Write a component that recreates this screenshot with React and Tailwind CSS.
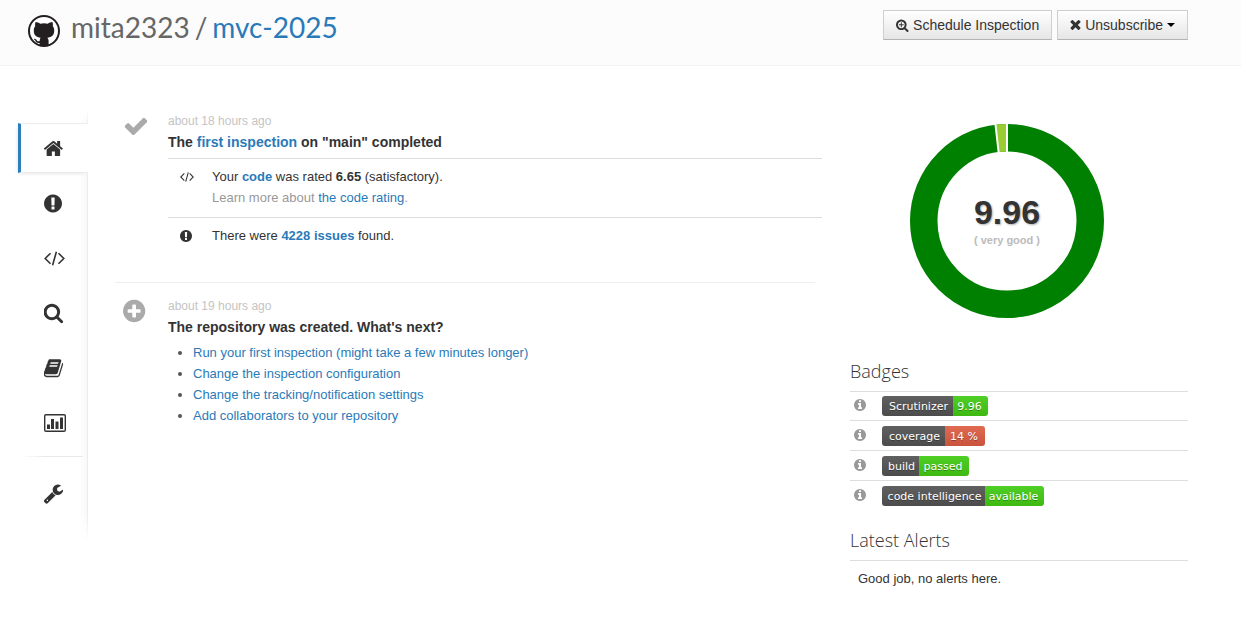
const CIRCLE =
  'M896 128q209 0 385.5 103t279.5 279.5 103 385.5-103 385.5-279.5 279.5-385.5 103-385.5-103-279.5-279.5-103-385.5 103-385.5 279.5-279.5 385.5-103z';
const LENS =
  'M1216 832q0-185-131.5-316.5t-316.5-131.5-316.5 131.5-131.5 316.5 131.5 316.5 316.5 131.5 316.5-131.5 131.5-316.5zm512 832q0 52-38 90t-90 38q-54 0-90-38l-343-342q-179 124-399 124-143 0-273.5-55.5t-225-150-150-225-55.5-273.5 55.5-273.5 150-225 225-150 273.5-55.5 273.5 55.5 225 150 150 225 55.5 273.5q0 220-124 399l343 343q37 37 37 90z';

const GLYPHS = {
  home: {
    box: '96 0 1792 1792',
    d: 'M1472 992v480q0 26-19 45t-45 19h-384v-384h-256v384h-384q-26 0-45-19t-19-45v-480q0-1 .5-3t.5-3l575-474 575 474q1 2 1 6zm223-69l-62 74q-8 9-21 11h-3q-13 0-21-7l-692-577-692 577q-12 8-24 7-13-2-21-11l-62-74q-8-10-7-23.5t11-21.5l719-599q32-26 76-26t76 26l244 204v-195q0-14 9-23t23-9h192q14 0 23 9t9 23v408l219 182q10 8 11 21.5t-7 23.5z',
  },
  alert: {
    box: '128 0 1792 1792',
    d: CIRCLE + 'M1024 1375v-190q0-14-9-23.5t-22-9.5h-192q-13 0-23 10t-10 23v190q0 13 10 23t23 10h192q13 0 22-9.5t9-23.5zM1022 1031l18-621q0-12-10-18-10-8-24-8h-220q-14 0-24 8-10 6-10 18l17 621q0 10 10 17.5t24 7.5h185q14 0 23.5-7.5t10.5-17.5z',
  },
  search: { box: '96 64 1792 1792', d: LENS },
  zoomIn: {
    box: '64 64 1728 1728',
    d: 'M1088 800v64q0 13-9.5 22.5t-22.5 9.5h-224v224q0 13-9.5 22.5t-22.5 9.5h-64q-13 0-22.5-9.5t-9.5-22.5v-224h-224q-13 0-22.5-9.5t-9.5-22.5v-64q0-13 9.5-22.5t22.5-9.5h224v-224q0-13 9.5-22.5t22.5-9.5h64q13 0 22.5 9.5t9.5 22.5v224h224q13 0 22.5 9.5t9.5 22.5z' + LENS,
  },
  book: {
    box: '96 32 1792 1792',
    d: 'M1703 478q40 57 18 129l-275 906q-19 64-76.5 107.5t-122.5 43.5h-923q-77 0-148.5-53.5t-99.5-131.5q-24-67-2-127 0-4 3-27t4-37q1-8-3-21.5t-3-19.5q2-11 8-21t16.5-23.5 16.5-23.5q23-38 45-91.5t30-91.5q3-10 .5-30t-.5-28q3-11 17-28t17-23q21-36 42-92t25-90q1-9-2.5-32t.5-28q4-13 22-30.5t22-22.5q19-26 42.5-84.5t27.5-96.5q1-8-3-25.5t-2-26.5q2-8 9-18t18-23 17-21q8-12 16.5-30.5t15-35 16-36 19.5-32 26.5-23.5 36-11.5 47.5 5.5l-1 3q38-9 51-9h761q74 0 114 56t18 130l-274 906q-36 119-71.5 153.5t-128.5 34.5h-869q-27 0-38 15-11 16-1 43 24 70 144 70h923q29 0 56-15.5t35-41.5l300-987q7-22 5-57 38 15 59 43zm-1064 2q-4 13 2 22.5t20 9.5h608q13 0 25.5-9.5t16.5-22.5l21-64q4-13-2-22.5t-20-9.5h-608q-13 0-25.5 9.5t-16.5 22.5zm-83 256q-4 13 2 22.5t20 9.5h608q13 0 25.5-9.5t16.5-22.5l21-64q4-13-2-22.5t-20-9.5h-608q-13 0-25.5 9.5t-16.5 22.5z',
  },
  wrench: {
    box: '96 0 1792 1792',
    d: 'M448 1472q0-26-19-45t-45-19-45 19-19 45 19 45 45 19 45-19 19-45zm644-420l-682 682q-37 37-90 37-52 0-91-37l-106-108q-38-36-38-90 0-53 38-91l681-681q39 98 114.5 173.5t173.5 114.5zm634-435q0 39-23 106-47 134-164.5 217.5t-258.5 83.5q-185 0-316.5-131.5t-131.5-316.5 131.5-316.5 316.5-131.5q58 0 121.5 16.5t107.5 46.5q16 11 16 28t-16 28l-293 169v224l193 107q5-3 79-48.5t135.5-81 70.5-35.5q15 0 23.5 10t8.5 25z',
  },
  check: {
    box: '0 0 1792 1792',
    d: 'M1671 566q0 40-28 68l-724 724-136 136q-28 28-68 28t-68-28l-136-136-362-362q-28-28-28-68t28-68l136-136q28-28 68-28t68 28l294 295 656-657q28-28 68-28t68 28l136 136q28 28 28 68z',
  },
  plus: {
    box: '128 0 1792 1792',
    d: CIRCLE + 'M1344 960v-128q0-26-19-45t-45-19h-256v-256q0-26-19-45t-45-19h-128q-26 0-45 19t-19 45v256h-256q-26 0-45 19t-19 45v128q0 26 19 45t45 19h256v256q0 26 19 45t45 19h128q26 0 45-19t19-45v-256h256q26 0 45-19t19-45z',
  },
  info: {
    box: '128 128 1536 1536',
    d: CIRCLE + 'M1152 1376v-160q0-14-9-23t-23-9h-96v-512q0-14-9-23t-23-9h-320q-14 0-23 9t-9 23v160q0 14 9 23t23 9h96v320h-96q-14 0-23 9t-9 23v160q0 14 9 23t23 9h448q14 0 23-9t9-23zM1024 480v-160q0-14-9-23t-23-9h-192q-14 0-23 9t-9 23v160q0 14 9 23t23 9h192q14 0 23-9t9-23z',
  },
  times: {
    box: '256 256 1280 1536',
    d: 'M1490 1322q0 40-28 68l-136 136q-28 28-68 28t-68-28l-294-294-294 294q-28 28-68 28t-68-28l-136-136q-28-28-28-68t28-68l294-294-294-294q-28-28-28-68t28-68l136-136q28-28 68-28t68 28l294 294 294-294q28-28 68-28t68 28l136 136q28 28 28 68t-28 68l-294 294 294 294q28 28 28 68z',
  },
};

function Glyph({ name, className }) {
  const glyph = GLYPHS[name];
  return (
    <svg viewBox={glyph.box} className={className} fill="currentColor" fillRule="evenodd" aria-hidden="true">
      <path d={glyph.d} />
    </svg>
  );
}

function CodeGlyph({ className }) {
  return (
    <svg viewBox="0 0 21 15" className={className} fill="none" stroke="currentColor" strokeWidth="1.6" aria-hidden="true">
      <path d="M6.5 2.2 1.2 7.5l5.3 5.3M14.5 2.2l5.3 5.3-5.3 5.3M12.4.7 8.6 14.3" />
    </svg>
  );
}

function ChartGlyph({ className }) {
  return (
    <svg viewBox="0 0 22 18" className={className} fill="currentColor" aria-hidden="true">
      <path fillRule="evenodd" d="M2 0h18a2 2 0 0 1 2 2v14a2 2 0 0 1-2 2H2a2 2 0 0 1-2-2V2a2 2 0 0 1 2-2zm0 1.4a.6.6 0 0 0-.6.6v14c0 .3.3.6.6.6h18c.3 0 .6-.3.6-.6V2a.6.6 0 0 0-.6-.6z" />
      <path d="M3 10.500h3V15H3zM7 5h3v10H7zM11.500 7.500h3V15h-3zM16 3.500h3V15h-3z" />
    </svg>
  );
}

function GithubLogo() {
  return (
    <svg viewBox="0 0 32 32" className="h-8 w-8 shrink-0" aria-hidden="true">
      <circle cx="16" cy="16" r="15" fill="#fff" stroke="#231f20" strokeWidth="2" />
      <path
        fill="#231f20"
        d="M7.600 7C9 6.900 10.700 7.700 12.300 8.700Q16 7.800 19.700 8.700C21.300 7.700 23 6.900 24.400 7Q25.300 9 24.800 11.300C26 12.700 26.300 14.200 26.200 16C26.100 20.500 23.600 22.200 19.400 22.700Q20.600 24 20.600 25.600V31H11.600V27.900C8.800 28.300 7.900 27 7.200 25.600Q6.600 24.500 5.700 23.900C7.200 23.300 8.200 24.300 8.900 25.400Q9.900 26.800 11.700 26.100Q11.700 23.600 12.600 22.700C8.400 22.200 5.900 20.500 5.800 16C5.700 14.200 6 12.700 7.200 11.300Q6.700 9 7.600 7z"
      />
    </svg>
  );
}

const BUTTON =
  'flex h-[30px] items-center border border-[#cfcfcf] border-b-[#b3b3b3] bg-linear-to-b from-white to-[#e6e6e6] px-3 text-sm text-[#333]';

function Header() {
  return (
    <header className="flex items-start justify-between border-b border-[#f2f2f2] bg-[repeating-linear-gradient(135deg,#fbfbfb_0px,#fbfbfb_2px,#fcfcfc_2px,#fcfcfc_4px)] pt-[10px] pr-[53px] pb-[18px] pl-7">
      <div className="flex items-start gap-[11px]">
        <div className="pt-[5px]">
          <GithubLogo />
        </div>
        <h1 className="flex gap-[5px] font-[Lato,sans-serif] text-[28px] leading-[34px] text-[#666]">
          <span>mita2323</span>
          <span>/</span>
          <a href="#repo" className="text-[#2a7ab9]">mvc-2025</a>
        </h1>
      </div>
      <div className="flex gap-[5px]">
        <button type="button" className={BUTTON}>
          <Glyph name="zoomIn" className="mr-1 h-[13px] w-[13px]" />
          Schedule Inspection
        </button>
        <button type="button" className={BUTTON} aria-haspopup="menu">
          <Glyph name="times" className="mr-1 h-[13px] w-[11px]" />
          Unsubscribe
          <svg viewBox="0 0 8 4" className="ml-1 h-1 w-2" aria-hidden="true">
            <path d="M0 0h8L4 4z" fill="#000" />
          </svg>
        </button>
      </div>
    </header>
  );
}

const ICON = 'h-[21px] w-[21px]';
const NAV_ITEMS = [
  { label: 'Overview', icon: <Glyph name="home" className={ICON} /> },
  { label: 'Issues', icon: <Glyph name="alert" className={ICON} /> },
  { label: 'Code', icon: <CodeGlyph className="h-[15px] w-[21px]" /> },
  { label: 'Inspections', icon: <Glyph name="search" className={ICON} /> },
  { label: 'Reports', icon: <Glyph name="book" className={ICON} /> },
  { label: 'Statistics', icon: <ChartGlyph className="h-[18px] w-[22px]" /> },
];

function Sidebar() {
  return (
    <nav
      aria-label="Repository"
      className="w-[70px] shrink-0 self-start bg-[linear-gradient(to_bottom,#fff,transparent_16px,transparent_calc(100%-28px),#fff),linear-gradient(to_left,#ececec_1px,#f9f9f9_1px,#fff_9px)] pt-[13px] pb-6 text-[#333]"
    >
      <ul className="flex flex-col gap-[5px]">
        {NAV_ITEMS.map((item, index) => (
          <li
            key={item.label}
            className={
              index === 0
                ? 'border-y border-l-3 border-y-[#ececec] border-l-[#2a7fbf] bg-white shadow-[-2px_2px_4px_-2px_rgba(0,0,0,0.15)]'
                : 'border-y border-l-3 border-transparent'
            }
          >
            <a href="#section" aria-label={item.label} className="flex h-12 items-center pl-[23px]">
              {item.icon}
            </a>
          </li>
        ))}
      </ul>
      <div className="mt-2 mr-[5px] ml-1 h-px bg-linear-to-r from-white to-[#e8e8e8] to-40%" />
      <a href="#settings" aria-label="Settings" className="mt-[11px] flex h-[50px] items-center pl-[26px]">
        <Glyph name="wrench" className={ICON} />
      </a>
    </nav>
  );
}

const LINK = 'text-[#2a7ab9]';

function Entry({ icon, time, title, children }) {
  return (
    <article className="flex pl-2">
      <div className="w-[45px] shrink-0 pt-[3px] text-[#aaa]">{icon}</div>
      <div className="min-w-0 flex-1">
        <p className="text-xs leading-[22px] text-[#c4c4c4]">{time}</p>
        <h2 className="text-sm leading-[21px] font-bold">{title}</h2>
        {children}
      </div>
    </article>
  );
}

function Detail({ icon, children }) {
  return (
    <li className="flex border-t border-[#ddd] pt-[7px] pb-[9px]">
      <div className="flex h-[21px] w-[44px] shrink-0 items-center pl-3">{icon}</div>
      <div>{children}</div>
    </li>
  );
}

const NEXT_STEPS = [
  'Run your first inspection (might take a few minutes longer)',
  'Change the inspection configuration',
  'Change the tracking/notification settings',
  'Add collaborators to your repository',
];

function Timeline() {
  return (
    <main className="min-w-0 flex-1 pr-[7px] text-[13px] leading-[21px]">
      <Entry
        icon={<Glyph name="check" className="h-[26px] w-[26px]" />}
        time="about 18 hours ago"
        title={
          <>
            The <a href="#inspection" className={LINK}>first inspection</a> on "main" completed
          </>
        }
      >
        <ul className="mt-[5px] -mr-[7px]">
          <Detail icon={<CodeGlyph className="h-[10px] w-[14px]" />}>
            <p>
              Your <a href="#code" className="font-bold text-[#2a7ab9]">code</a> was rated <b>6.65</b> (satisfactory).
            </p>
            <p className="text-[#999]">
              Learn more about <a href="#rating" className={LINK}>the code rating</a>.
            </p>
          </Detail>
          <Detail icon={<Glyph name="alert" className="h-[14px] w-[14px]" />}>
            <p>
              There were <a href="#issues" className="font-bold text-[#2a7ab9]">4228 issues</a> found.
            </p>
          </Detail>
        </ul>
      </Entry>
      <hr className="mt-[27px] mb-3 border-[#eee]" />
      <Entry
        icon={<Glyph name="plus" className="h-[26px] w-[26px]" />}
        time="about 19 hours ago"
        title="The repository was created. What's next?"
      >
        <ul className="mt-1 list-disc pl-[25px] marker:text-[#555]">
          {NEXT_STEPS.map((step) => (
            <li key={step}>
              <a href="#step" className={LINK}>{step}</a>
            </li>
          ))}
        </ul>
      </Entry>
    </main>
  );
}

function Donut() {
  return (
    <div className="grid place-items-center pr-6">
      <svg viewBox="0 0 196 196" className="col-start-1 row-start-1 h-[196px] w-[196px]" role="img" aria-label="Rating distribution">
        <circle cx="98" cy="98" r="83.250" fill="none" stroke="#008000" strokeWidth="27.500" />
        <path d="M98 1A97 97 0 0 0 86.300 1.700L89.700 29A69.500 69.500 0 0 1 98 28.500z" fill="#9acd32" />
        <path d="M98 0v29M86.300 0 89.700 30" stroke="#fff" strokeWidth="2" />
      </svg>
      <div className="col-start-1 row-start-1 pt-[2px] text-center font-bold">
        <p className="text-[34px] leading-9 text-[#333] text-shadow-[1px_1px_2px_rgba(0,0,0,0.3)]">9.96</p>
        <p className="text-[11px] leading-5 text-[#bbb]">( very good )</p>
      </div>
    </div>
  );
}

const BADGES = [
  { label: 'Scrutinizer', value: '9.96', labelClass: 'w-[71px]', valueClass: 'w-[35px] from-[#4fcf25] to-[#3fb911]' },
  { label: 'coverage', value: '14 %', labelClass: 'w-[63px]', valueClass: 'w-[40px] from-[#e06a52] to-[#c9533c]' },
  { label: 'build', value: 'passed', labelClass: 'w-[37px]', valueClass: 'w-[50px] from-[#4fcf25] to-[#3fb911]' },
  { label: 'code intelligence', value: 'available', labelClass: 'w-[103px]', valueClass: 'w-[59px] from-[#4fcf25] to-[#3fb911]' },
];

function Badge({ label, value, labelClass, valueClass }) {
  return (
    <a
      href="#badge"
      className="flex h-5 overflow-hidden rounded-[3px] font-['DejaVu_Sans',sans-serif] text-[11px] leading-[21px] whitespace-nowrap text-white text-shadow-[0_1px_0_rgba(1,1,1,0.3)]"
    >
      <span className={'flex justify-center bg-linear-to-b from-[#606060] to-[#4c4c4c] pl-[2px] ' + labelClass}>{label}</span>
      <span className={'flex justify-center bg-linear-to-b pr-[2px] ' + valueClass}>{value}</span>
    </a>
  );
}

const SECTION_TITLE = "font-['Open_Sans',sans-serif] text-lg leading-10 font-light text-[#333]";

function Summary() {
  return (
    <aside className="w-[338px] shrink-0 pt-[13px]">
      <Donut />
      <h2 className={SECTION_TITLE + ' mt-8'}>Badges</h2>
      <ul>
        {BADGES.map((badge) => (
          <li key={badge.label} className="flex h-[30px] items-center border-t border-[#ddd] pl-1 first:h-[29px]">
            <Glyph name="info" className="mr-4 mb-[2px] h-3 w-3 text-[#999]" />
            <Badge {...badge} />
          </li>
        ))}
      </ul>
      <h2 className={SECTION_TITLE + ' mt-[10px]'}>Latest Alerts</h2>
      <p className="border-t border-[#ddd] px-2 py-[7px] text-[13px] leading-[21px]">Good job, no alerts here.</p>
    </aside>
  );
}

export default function App() {
  return (
    <div className="min-h-screen bg-white font-['Liberation_Sans',Arial,sans-serif] text-[#333]">
      <Header />
      <div className="flex pt-11 pr-[53px] pl-[18px]">
        <Sidebar />
        <div className="ml-[27px] flex min-w-0 flex-1 gap-7">
          <Timeline />
          <Summary />
        </div>
      </div>
    </div>
  );
}
